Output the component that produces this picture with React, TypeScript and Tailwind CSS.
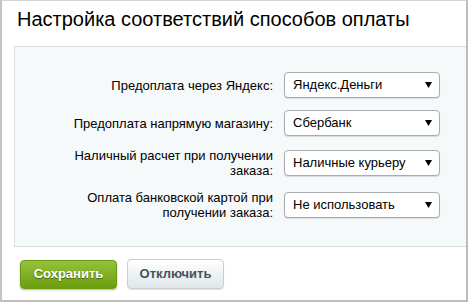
import React from 'react';

interface Row {
  label: React.ReactNode;
  value: string;
}

const rows: Row[] = [
  { label: 'Предоплата через Яндекс:', value: 'Яндекс.Деньги' },
  { label: 'Предоплата напрямую магазину:', value: 'Сбербанк' },
  {
    label: (
      <>
        Наличный расчет при получении
        <br />
        заказа:
      </>
    ),
    value: 'Наличные курьеру',
  },
  {
    label: (
      <>
        Оплата банковской картой при
        <br />
        получении заказа:
      </>
    ),
    value: 'Не использовать',
  },
];

const Select = ({ value }: { value: string }) => (
  <div className="relative flex h-[26px] w-[156px] items-center rounded-[4px] border border-[#a8acae] bg-white pl-[8px] text-[13px] text-black shadow-[0_1px_1px_rgba(0,0,0,0.12)]">
    <span>{value}</span>
    <svg
      className="absolute right-[7px] top-[9px]"
      width="7"
      height="6"
      viewBox="0 0 7 6"
    >
      <path d="M0 0 H7 L3.5 6 Z" fill="#000" />
    </svg>
  </div>
);

export default function App() {
  return (
    <div
      className="flex h-[302px] w-[468px] flex-col border-t border-r-2 border-b-2 border-l-2 border-t-[#d4d4d4] border-r-[#bdbdbd] border-b-[#bdbdbd] border-l-[#c4c4c4] bg-white"
      style={{ fontFamily: '"Liberation Sans", Arial, sans-serif' }}
    >
      <h1 className="ml-[15px] mt-[6px] text-[20px] leading-[24px] font-normal text-black">
        Настройка соответствий способов оплаты
      </h1>

      {/* Settings panel */}
      <div className="ml-[12px] mt-[15px] flex flex-col gap-3 border-t border-b border-l border-[#d3dde1] bg-[#f5f9fa] pt-[25px] pb-[26px]">
        {rows.map((row, i) => (
          <div key={i} className="flex items-center">
            <div className="w-[258px] text-right text-[13px] leading-[15px] text-black">
              {row.label}
            </div>
            <div className="ml-[11px]">
              <Select value={row.value} />
            </div>
          </div>
        ))}
      </div>

      <div className="ml-[18px] mt-[12px] flex items-center gap-[10px]">
        <button className="h-[29px] w-[97px] rounded-[4px] border border-[#6a9a12] bg-gradient-to-b from-[#95c43a] to-[#6c9c0e] text-[13px] font-bold text-white shadow-[0_1px_2px_rgba(0,0,0,0.3)] [text-shadow:0_1px_1px_rgba(0,0,0,0.45)]">
          Сохранить
        </button>
        <button className="h-[30px] w-[97px] rounded-[4px] border border-[#c6cfd3] bg-gradient-to-b from-[#ffffff] to-[#dfe6e9] text-[13px] font-bold text-[#45525a] shadow-[0_1px_1px_rgba(0,0,0,0.12)]">
          Отключить
        </button>
      </div>
    </div>
  );
}
